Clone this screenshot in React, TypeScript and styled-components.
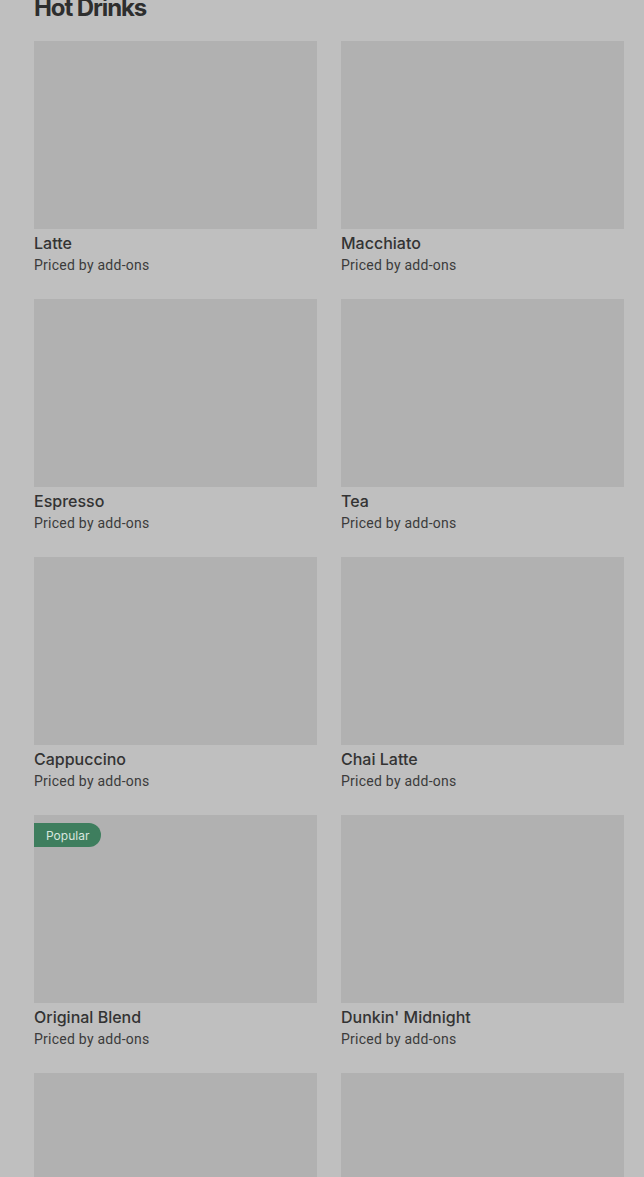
import React from "react";
import styled, { createGlobalStyle } from "styled-components";

type Item = {
  name: string;
  popular?: boolean;
};

const items: Item[] = [
  { name: "Latte" },
  { name: "Macchiato" },
  { name: "Espresso" },
  { name: "Tea" },
  { name: "Cappuccino" },
  { name: "Chai Latte" },
  { name: "Original Blend", popular: true },
  { name: "Dunkin' Midnight" },
  { name: "Iced Latte" },
  { name: "Iced Coffee" },
];

const App: React.FC = () => {
  return (
    <>
      <GlobalStyle />
      <Page>
        <Heading>Hot Drinks</Heading>
        <Grid>
          {items.map((item) => (
            <Card key={item.name}>
              <Thumb>{item.popular && <Badge>Popular</Badge>}</Thumb>
              <CardTitle>{item.name}</CardTitle>
              <CardBody>Priced by add-ons</CardBody>
            </Card>
          ))}
        </Grid>
      </Page>
    </>
  );
};

export default App;

const GlobalStyle = createGlobalStyle`
  html, body {
    margin: 0;
    padding: 0;
    background: #bfbfbf;
    overflow: hidden;
  }
  body {
    font-family: Inter, "Noto Sans", sans-serif;
  }
`;

const Page = styled.div`
  height: 1177px;
  overflow: hidden;
  padding: 0 20px 0 34px;
  background: #bfbfbf;
`;

const Heading = styled.h2`
  margin: -7px 0 0;
  height: 48px;
  font-size: 24px;
  line-height: 30px;
  font-weight: 700;
  letter-spacing: -1.1px;
  color: #2e2e2e;
`;

const Grid = styled.div`
  display: grid;
  grid-template-columns: 283px 283px;
  column-gap: 24px;
  row-gap: 24px;
`;

const Card = styled.div`
  display: flex;
  flex-direction: column;
`;

const Thumb = styled.div`
  position: relative;
  height: 188px;
  background: #b1b1b1;
  margin-bottom: 4px;
`;

const Badge = styled.span`
  position: absolute;
  top: 8px;
  left: 0;
  height: 24px;
  padding: 0 12px;
  display: flex;
  align-items: center;
  font-size: 12px;
  color: #d8e6de;
  background: #3e7e5e;
  border-radius: 0 12px 12px 0;
`;

const CardTitle = styled.div`
  font-size: 16px;
  line-height: 20px;
  font-weight: 500;
  color: #333333;
`;

const CardBody = styled.div`
  margin-top: 2px;
  font-family: Roboto, "Noto Sans", sans-serif;
  font-size: 14px;
  line-height: 20px;
  letter-spacing: 0.25px;
  color: #3b3b3b;
`;
